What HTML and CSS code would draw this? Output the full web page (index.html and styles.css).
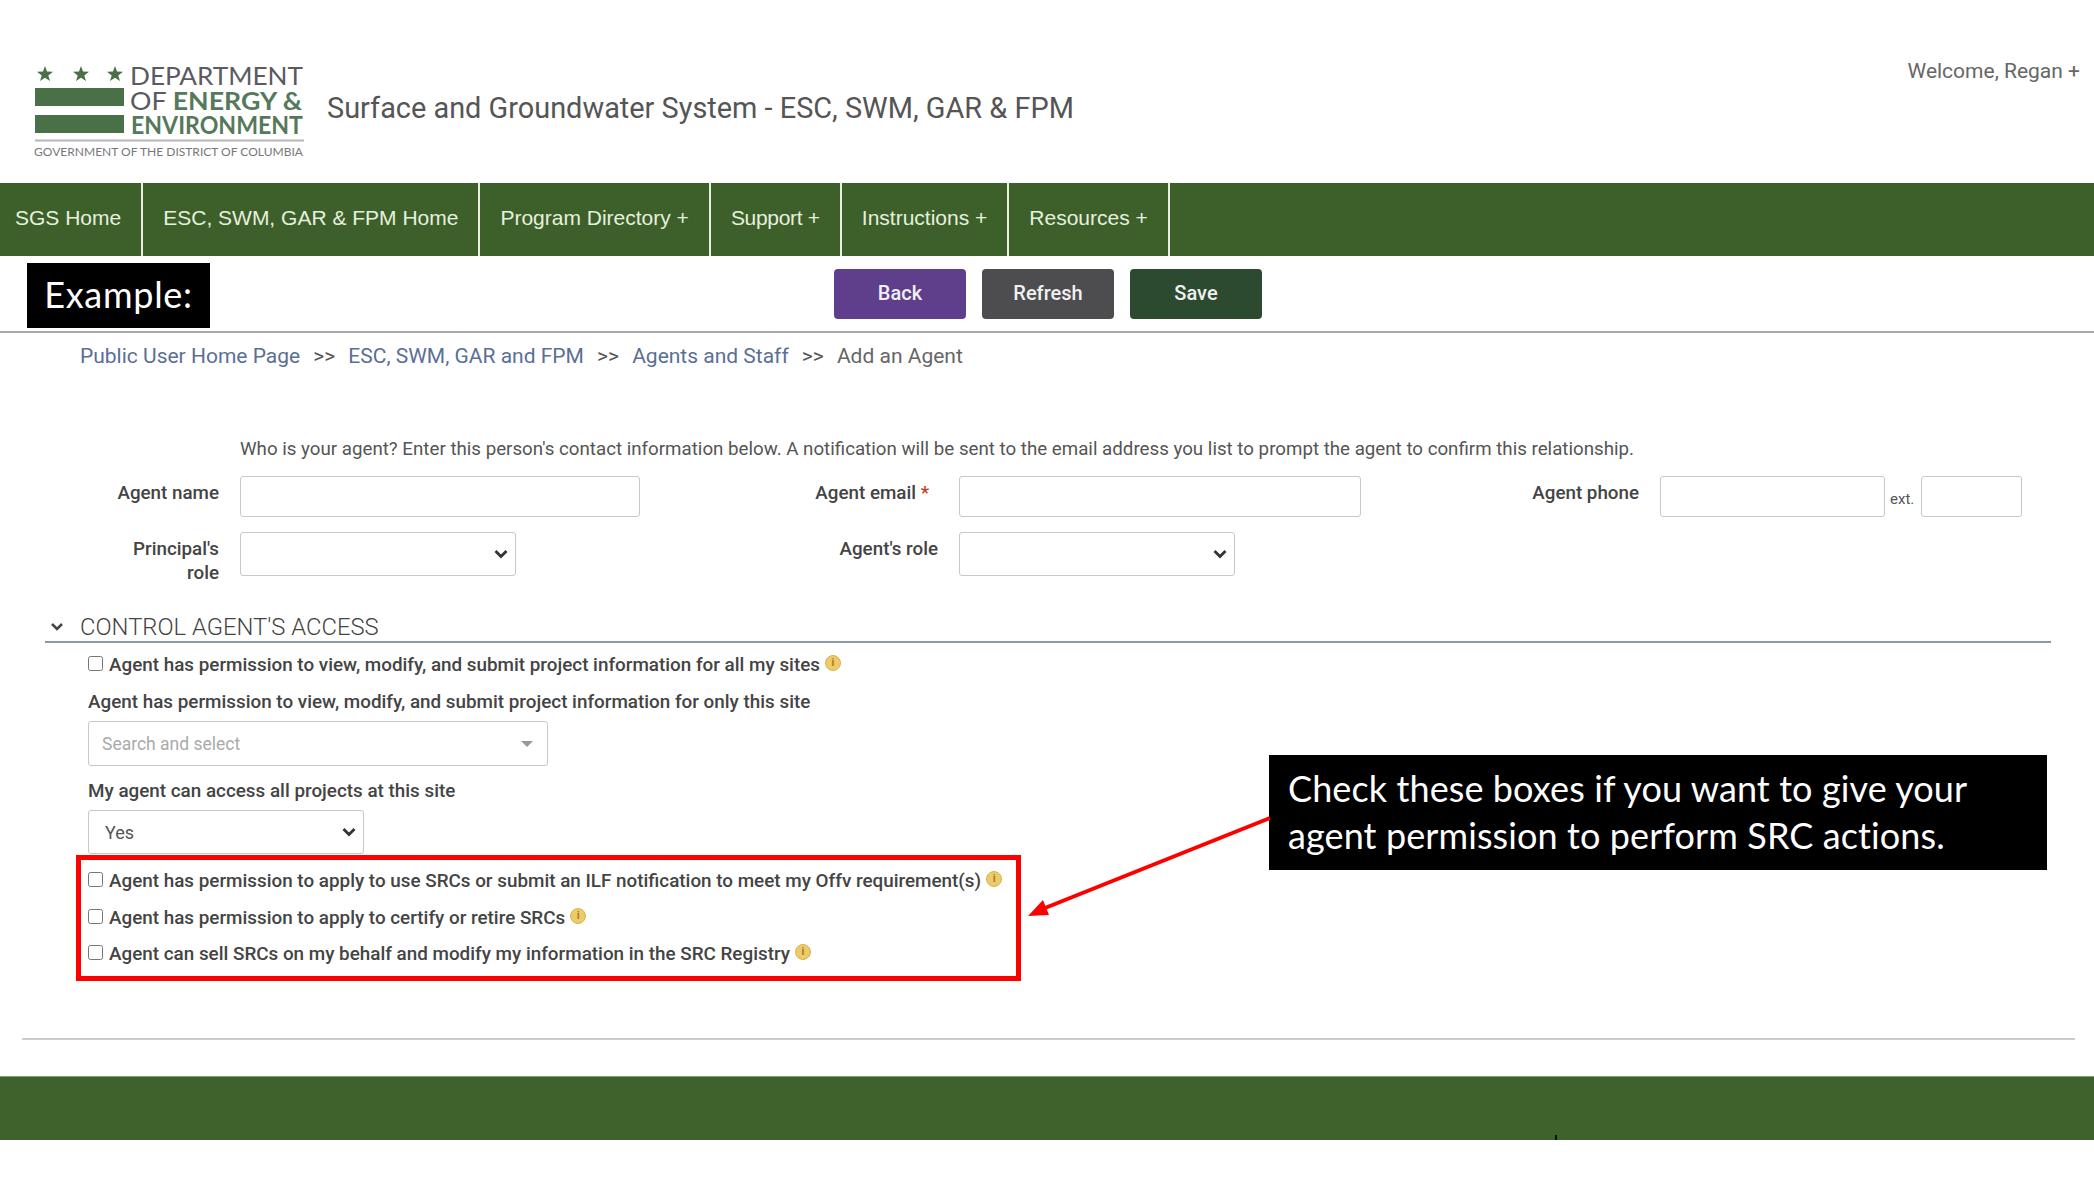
FILE: index.html
```html
<!DOCTYPE html>
<html lang="en">
<head>
  <meta charset="UTF-8" />
  <meta name="viewport" content="width=device-width, initial-scale=1.0" />
  <title>Add an Agent</title>
  <link rel="stylesheet" href="styles.css">
</head>
<body>
  <header class="site-header">
    <svg class="logo" width="310" height="110" viewBox="0 0 310 110">
      <g fill="#4a7048">
        <polygon points="8,10 10,15.6 16,15.8 11.3,19.4 13,25 8,21.8 3,25 4.7,19.4 0,15.8 6,15.6" transform="translate(37 1)"/>
        <polygon points="8,10 10,15.6 16,15.8 11.3,19.4 13,25 8,21.8 3,25 4.7,19.4 0,15.8 6,15.6" transform="translate(73 1)"/>
        <polygon points="8,10 10,15.6 16,15.8 11.3,19.4 13,25 8,21.8 3,25 4.7,19.4 0,15.8 6,15.6" transform="translate(107 1)"/>
        <rect x="35" y="33" width="89" height="18"/>
        <rect x="35" y="60" width="89" height="18"/>
      </g>
      <rect x="35" y="84.5" width="269" height="2" fill="#b5b5b8"/>
      <g class="logo-text">
        <text x="130" y="30" textLength="173" lengthAdjust="spacingAndGlyphs" fill="#5a5a60">DEPARTMENT</text>
        <text x="130" y="55" textLength="172" lengthAdjust="spacingAndGlyphs" fill="#5a5a60">OF <tspan class="logo-bold" fill="#55795a">ENERGY &amp;</tspan></text>
        <text class="logo-bold" x="131" y="79" textLength="172" lengthAdjust="spacingAndGlyphs" fill="#55795a">ENVIRONMENT</text>
        <text class="logo-small" x="34" y="101" textLength="269" lengthAdjust="spacingAndGlyphs" fill="#77777c">GOVERNMENT OF THE DISTRICT OF COLUMBIA</text>
      </g>
    </svg>
    <div class="site-title">Surface and Groundwater System - ESC, SWM, GAR &amp; FPM</div>
    <div class="welcome">Welcome, Regan +</div>
  </header>

  <nav class="main-nav">
    <a href="#">SGS Home</a>
    <a href="#">ESC, SWM, GAR &amp; FPM Home</a>
    <a href="#">Program Directory +</a>
    <a href="#" class="nav-tight">Support +</a>
    <a href="#">Instructions +</a>
    <a href="#">Resources +</a>
  </nav>

  <div class="toolbar">
    <div class="example-tag">Example:</div>
    <button class="btn btn-back">Back</button>
    <button class="btn btn-refresh">Refresh</button>
    <button class="btn btn-save">Save</button>
  </div>

  <div class="breadcrumb">
    <a href="#">Public User Home Page</a><span class="sep">&gt;&gt;</span>
    <a href="#">ESC, SWM, GAR and FPM</a><span class="sep">&gt;&gt;</span>
    <a href="#">Agents and Staff</a><span class="sep">&gt;&gt;</span>
    <span class="current">Add an Agent</span>
  </div>

  <main>
    <p class="intro">Who is your agent? Enter this person's contact information below. A notification will be sent to the email address you list to prompt the agent to confirm this relationship.</p>

    <div class="agent-form">
      <label class="field-label">Agent name</label>
      <input class="text-input" type="text" />
      <label class="field-label email-label">Agent email <span class="req">*</span></label>
      <input class="text-input" type="text" />
      <label class="field-label">Agent phone</label>
      <input class="text-input" type="text" />
      <span class="ext">ext.</span>
      <input class="text-input" type="text" />

      <label class="field-label">Principal's<br>role</label>
      <div><select class="select-input role-select"><option></option></select></div>
      <label class="field-label">Agent's role</label>
      <div><select class="select-input role-select"><option></option></select></div>
    </div>

    <section class="access">
      <h2 class="access-title"><svg class="chevron" width="14" height="10" viewBox="0 0 14 10"><path d="M2 2 L7 7 L12 2" fill="none" stroke="#444" stroke-width="2.5"/></svg>CONTROL AGENT'S ACCESS</h2>

      <div class="access-body">
        <div class="check-row first"><input type="checkbox" /><span>Agent has permission to view, modify, and submit project information for all my sites</span><span class="info">i</span></div>
        <div class="sub-label site-label">Agent has permission to view, modify, and submit project information for only this site</div>
        <div class="search-select"><span>Search and select</span><i class="caret"></i></div>
        <div class="sub-label access-label">My agent can access all projects at this site</div>
        <select class="select-input yes-select"><option>Yes</option></select>
      </div>

      <div class="src-group">
        <div class="check-row"><input type="checkbox" /><span>Agent has permission to apply to use SRCs or submit an ILF notification to meet my Offv requirement(s)</span><span class="info">i</span></div>
        <div class="check-row"><input type="checkbox" /><span>Agent has permission to apply to certify or retire SRCs</span><span class="info">i</span></div>
        <div class="check-row"><input type="checkbox" /><span>Agent can sell SRCs on my behalf and modify my information in the SRC Registry</span><span class="info">i</span></div>
      </div>
    </section>
  </main>

  <hr class="page-rule" />
  <footer class="site-footer"><i class="cursor-tick"></i></footer>

  <!-- slide annotations on top of the page -->
  <div class="callout">Check these boxes if you want to give your<br>agent permission to perform SRC actions.</div>
  <svg class="arrow" width="260" height="110" viewBox="0 0 260 110">
    <line x1="250" y1="5" x2="20" y2="97" stroke="#f00" stroke-width="4"/>
    <polygon points="8,103 23,87 29,102" fill="#f00"/>
  </svg>
</body>
</html>
```

FILE: styles.css
```css
body {
  margin: 0;
  position: relative;
  height: 1178px;
  overflow: hidden;
  font-family: 'Roboto', sans-serif;
  background: #fff;
  color: #444;
}

.site-header {
  height: 183px;
  display: flex;
  align-items: flex-start;
  box-sizing: border-box;
  padding-top: 55px;
  position: relative;
}

.logo {
  flex: none;
  margin-right: 17px;
}

.logo-text text {
  font-family: 'Lato', sans-serif;
  font-size: 25px;
}

.logo-text .logo-bold {
  font-weight: 700;
}

.logo-text .logo-small {
  font-size: 12px;
  font-weight: 400;
}

.site-title {
  font-size: 28.9px;
  line-height: 36px;
  margin-top: 35px;
  color: #555;
}

.welcome {
  margin-left: auto;
  margin-right: 14px;
  font-size: 21px;
  line-height: 24px;
  margin-top: 4px;
  color: #666;
}

.main-nav {
  height: 73px;
  display: flex;
  background: #3d602b;
}

.main-nav a {
  display: flex;
  align-items: center;
  padding: 0 20px 3px;
  border-right: 2px solid #e8efe2;
  color: #e6f0de;
  font-family: 'Liberation Sans', Arial, sans-serif;
  font-size: 21px;
  text-decoration: none;
  white-space: nowrap;
}

.main-nav a:first-child {
  padding-left: 15px;
}

.main-nav .nav-tight {
  letter-spacing: -0.3px;
}

.toolbar {
  height: 77px;
  box-sizing: border-box;
  border-bottom: 2px solid #aaa;
  display: flex;
  justify-content: center;
  gap: 16px;
  padding-top: 13px;
  padding-left: 2px;
  position: relative;
}

.example-tag {
  position: absolute;
  left: 27px;
  top: 7px;
  width: 183px;
  height: 65px;
  background: #000;
  color: #fff;
  font-family: 'Lato', sans-serif;
  font-size: 36px;
  letter-spacing: 0.7px;
  line-height: 63px;
  text-align: center;
}

.btn {
  width: 132px;
  height: 50px;
  border: none;
  border-radius: 4px;
  color: #f0f0f0;
  font-family: 'Roboto', sans-serif;
  font-size: 20px;
  font-weight: 500;
  padding: 0 0 2px;
  cursor: pointer;
}

.btn-back {
  background: #5f3f8c;
}

.btn-refresh {
  background: #4d4d4f;
}

.btn-save {
  background: #2c4a2f;
}

.breadcrumb {
  margin-top: 11px;
  padding-left: 80px;
  font-size: 21px;
  line-height: 24px;
  color: #666;
}

.breadcrumb a {
  color: #5a6f96;
  text-decoration: none;
}

.breadcrumb .sep {
  margin: 0 8px 0 13px;
  font-size: 21px;
  color: #555;
}

.intro {
  margin: 0;
  padding: 69px 0 0 240px;
  font-size: 18.73px;
  line-height: 24px;
  color: #555;
  white-space: nowrap;
}

.agent-form {
  margin-top: 15px;
  display: grid;
  grid-template-columns: 240px 400px 319px 402px 299px 225px 36px 101px;
  grid-template-rows: 41px 44px;
  row-gap: 15px;
}

.field-label {
  padding: 5px 21px 0 0;
  text-align: right;
  font-size: 18.8px;
  font-weight: 500;
  line-height: 24px;
  color: #444;
}

.email-label {
  padding-right: 30px;
}

.req {
  color: #c0392b;
}

.ext {
  font-size: 15px;
  padding: 14px 0 0 5px;
  color: #555;
}

.text-input,
.select-input {
  box-sizing: border-box;
  border: 1.5px solid #c8c8c8;
  border-radius: 3px;
  background: #fff;
  font-family: 'Roboto', sans-serif;
  font-size: 18px;
  color: #555;
}

.text-input {
  width: 100%;
  height: 41px;
  padding: 0 10px;
}

.select-input {
  appearance: none;
  background: #fff url("data:image/svg+xml,%3Csvg xmlns='http://www.w3.org/2000/svg' width='14' height='10'%3E%3Cpath d='M1.5 2 L7 7.5 L12.5 2' fill='none' stroke='%23333' stroke-width='2.8'/%3E%3C/svg%3E") no-repeat right 7px center;
}

.role-select {
  width: 276px;
  height: 44px;
}

.access {
  margin-top: 37px;
  padding-left: 45px;
}

.access-title {
  width: 2006px;
  box-sizing: border-box;
  margin: 0;
  padding-left: 5px;
  height: 30px;
  border-bottom: 2px solid #8a97b0;
  display: flex;
  align-items: center;
  font-size: 23.8px;
  font-weight: 300;
  line-height: 30px;
  color: #444;
}

.chevron {
  margin-right: 16px;
}

.access-body {
  padding-left: 43px;
}

.check-row {
  display: flex;
  align-items: center;
  font-size: 18.85px;
  font-weight: 500;
  line-height: 24px;
  color: #444;
  white-space: nowrap;
}

.check-row input {
  width: 15px;
  height: 15px;
  margin: -3px 6px 0 0;
  flex: none;
}

.check-row.first {
  margin-top: 10px;
}

.info {
  flex: none;
  width: 16px;
  height: 16px;
  box-sizing: border-box;
  margin: -4px 0 0 5px;
  border-radius: 50%;
  background: #eccb6c;
  border: 1px solid #dcb445;
  color: #a9801c;
  font-size: 11px;
  font-weight: 700;
  line-height: 14px;
  text-align: center;
}

.sub-label {
  font-size: 18.85px;
  font-weight: 500;
  line-height: 24px;
  color: #444;
}

.site-label {
  margin-top: 13px;
}

.search-select {
  width: 460px;
  height: 45px;
  box-sizing: border-box;
  margin-top: 7px;
  padding: 0 14px 0 13px;
  border: 1.5px solid #c8c8c8;
  border-radius: 3px;
  display: flex;
  align-items: center;
  justify-content: space-between;
  font-size: 17.5px;
  color: #aaa;
}

.caret {
  width: 0;
  height: 0;
  border-left: 6px solid transparent;
  border-right: 6px solid transparent;
  border-top: 6px solid #999;
}

.access-label {
  margin-top: 13px;
}

.yes-select {
  display: block;
  width: 276px;
  height: 44px;
  margin-top: 7px;
  padding-left: 16px;
}

.src-group {
  width: 945px;
  height: 126px;
  box-sizing: border-box;
  margin: 1px 0 0 31px;
  padding: 9px 0 0 7px;
  border: 5px solid #f00;
  display: flex;
  flex-direction: column;
  gap: 12.5px;
}

.page-rule {
  margin: 57px 19px 0 22px;
  border: none;
  height: 2px;
  background: #ccc;
}

.site-footer {
  position: relative;
  margin-top: 36px;
  height: 64px;
  background: #3e622c;
  border-top: 1px solid #8a9c80;
  box-sizing: border-box;
}

.cursor-tick {
  position: absolute;
  left: 1555px;
  bottom: 0;
  width: 2px;
  height: 5px;
  background: #111;
}

.callout {
  position: absolute;
  left: 1269px;
  top: 755px;
  width: 778px;
  height: 115px;
  box-sizing: border-box;
  padding: 10px 0 0 19px;
  background: #000;
  color: #fff;
  font-family: 'Lato', sans-serif;
  font-size: 36px;
  letter-spacing: 0.1px;
  line-height: 47px;
  white-space: nowrap;
}

.arrow {
  position: absolute;
  left: 1020px;
  top: 813px;
}
```
